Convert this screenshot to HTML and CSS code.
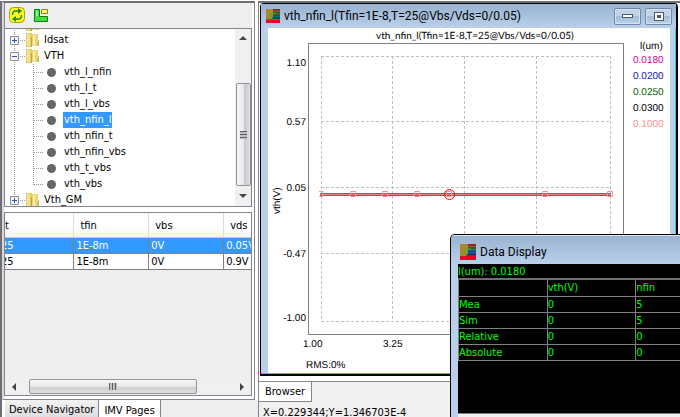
FILE: index.html
```html
<!DOCTYPE html>
<html lang="en">
<head>
<meta charset="utf-8">
<title>IMV Pages</title>
<link rel="stylesheet" href="styles.css">
</head>
<body>
<svg class="defs" aria-hidden="true">
  <defs>
    <symbol id="folder" viewBox="0 0 14 16">
      <path d="M0 1h6v14H0z" fill="#e6cd6c"/>
      <path d="M1 2h3v12H1z" fill="#f3e193"/>
      <path d="M6 2h6v6h1v6H5V4h1z" fill="#ecd478"/>
      <path d="M5 5h1v10H5z" fill="#c2a23a"/>
      <path d="M7 3h2v11H7z" fill="#f8ebae"/>
      <path d="M12 8h1v6h-1z" fill="#d4b64c"/>
      <path d="M11 11h1v2h-1z" fill="#8fb0bc"/>
    </symbol>
    <symbol id="chip" viewBox="0 0 16 16">
      <path d="M0 0h16v12H0z" fill="#17603f"/>
      <path d="M7 0h9v2H7z" fill="#8a2437"/>
      <path d="M7 2h9v1H7zM8 5h8v1H8z" fill="#b25a1c"/>
      <path d="M8 8h8v1H8z" fill="#1558a8"/>
      <path d="M8 10h8v1H8z" fill="#173c2b"/>
      <path d="M0 0h8v9l-2 3H0z" fill="#a98a2c"/>
      <path d="M1 2h1v1H1zM4 1h1v1H4zM2 5h1v1H2zM5 8h1v1H5zM6 2h1v1H6z" fill="#d2742c"/>
      <path d="M2 10l4-5h5M3 11l5-3" fill="none" stroke="#36b536"/>
      <path d="M0 12h16v4H0z" fill="#ee0022"/>
    </symbol>
  </defs>
</svg>
<div class="app">
  <aside class="side">
    <div class="pane">
      <div class="toolbar">
        <button class="tool" aria-label="Refresh">
          <svg width="17" height="17" viewBox="0 0 17 17"><rect x=".5" y=".5" width="15" height="15" rx="4" fill="#ffff18" stroke="#a89c20"/><path d="M3.500 8V6l2-2h4" fill="none" stroke="#1c8a1c" stroke-width="1.500"/><path d="M9 1l4 3-4 3z" fill="#1c8a1c"/><path d="M12.500 8v2l-2 2H7" fill="none" stroke="#1c8a1c" stroke-width="1.500"/><path d="M7 9l-4 3 4 3z" fill="#1c8a1c"/></svg>
        </button>
        <button class="tool" aria-label="Layout">
          <svg width="15" height="13" viewBox="0 0 15 13"><path d="M.5.500h5v7h8v5H.500z" fill="#3fe03f" stroke="#137a13"/><path d="M2 2h2v5H2z" fill="#90ff80"/><path d="M7.500.500h6v4h-6z" fill="#fff56a" stroke="#8a8420"/></svg>
        </button>
      </div>
      <div class="treebox">
        <ul class="tree">
          <li class="branch"><i class="knob"></i><svg class="folder"><use href="#folder"/></svg></li>
          <li class="branch"><i class="knob plus"></i><svg class="folder"><use href="#folder"/></svg><span>Idsat</span></li>
          <li class="branch"><i class="knob minus"></i><svg class="folder"><use href="#folder"/></svg><span>VTH</span></li>
          <li class="leaf"><i class="dot"></i><span>vth_l_nfin</span></li>
          <li class="leaf"><i class="dot"></i><span>vth_l_t</span></li>
          <li class="leaf"><i class="dot"></i><span>vth_l_vbs</span></li>
          <li class="leaf"><i class="dot"></i><span class="picked">vth_nfin_l</span></li>
          <li class="leaf"><i class="dot"></i><span>vth_nfin_t</span></li>
          <li class="leaf"><i class="dot"></i><span>vth_nfin_vbs</span></li>
          <li class="leaf"><i class="dot"></i><span>vth_t_vbs</span></li>
          <li class="leaf last"><i class="dot"></i><span>vth_vbs</span></li>
          <li class="branch"><i class="knob plus"></i><svg class="folder"><use href="#folder"/></svg><span>Vth_GM</span></li>
        </ul>
        <div class="vbar">
          <i class="arrow up"></i>
          <div class="thumb"><i class="grip"></i></div>
          <i class="arrow down"></i>
        </div>
      </div>
      <div class="tablebox">
        <div class="scroller">
          <table class="data">
            <thead><tr><th>t</th><th>tfin</th><th>vbs</th><th>vds</th></tr></thead>
            <tbody>
              <tr class="picked"><td>25</td><td>1E-8m</td><td>0V</td><td>0.05V</td></tr>
              <tr><td>25</td><td>1E-8m</td><td>0V</td><td>0.9V</td></tr>
            </tbody>
          </table>
        </div>
        <div class="hbar">
          <i class="arrow left"></i>
          <div class="thumb"><i class="grip"></i></div>
          <i class="arrow right"></i>
        </div>
      </div>
    </div>
    <div class="tabs">
      <button class="tab">Device Navigator</button>
      <button class="tab current">IMV Pages</button>
    </div>
  </aside>
  <main class="work">
    <div class="desktop">
      <section class="window plotwin">
        <header class="titlebar">
          <svg class="chip"><use href="#chip"/></svg>
          <h1>vth_nfin_l(Tfin=1E-8,T=25@Vbs/Vds=0/0.05)</h1>
          <button class="winbtn" aria-label="Minimize"><i class="min"></i></button>
          <button class="winbtn" aria-label="Maximize"><i class="max"></i></button>
        </header>
        <svg class="plot" viewBox="268 28 402 340" preserveAspectRatio="xMinYMin meet">
          <text class="caption" x="376" y="39">vth_nfin_l(Tfin=1E-8,T=25@Vbs/Vds=0/0.05)</text>
          <rect class="frame" x="308.500" y="43.500" width="315" height="291"/>
          <path class="grid" d="M321.500 56V321M392.500 56V321M464.500 56V321M536.500 56V321M610.500 56V321M321 56.500H610M321 121.500H610M321 187.500H610M321 253.500H610M321 321.500H610"/>
          <g text-anchor="end">
            <text x="306" y="66">1.10</text>
            <text x="306" y="125">0.57</text>
            <text x="306" y="191">0.05</text>
            <text x="306" y="257">-0.47</text>
            <text x="306" y="321">-1.00</text>
          </g>
          <text x="303" y="347">1.00</text>
          <text x="383" y="347">3.25</text>
          <text x="306" y="368">RMS:0%</text>
          <text transform="translate(280 214) rotate(-90)">vth(V)</text>
          <path class="curve" d="M320 194.500H611"/>
          <path class="core" d="M320 194.500H611"/>
          <path class="marks" d="M319 191.500h4v5h-4M350.500 191.500h5v5h-5zM382.500 191.500h5v5h-5zM414.500 191.500h5v5h-5zM446.500 191.500h5v5h-5zM542.500 191.500h5v5h-5zM607.500 191.500h5v5h-5z"/>
          <circle class="focus" cx="449.500" cy="194.500" r="5"/>
          <text x="640" y="49">l(um)</text>
          <text x="633" y="63" fill="#cc0099">0.0180</text>
          <text x="633" y="79" fill="#1414b4">0.0200</text>
          <text x="633" y="95" fill="#006400">0.0250</text>
          <text x="633" y="111">0.0300</text>
          <text x="633" y="127" fill="#ff9090">0.1000</text>
        </svg>
      </section>
    </div>
    <div class="strip"><button class="browser">Browser</button></div>
    <div class="status">X=0.229344;Y=1.346703E-4</div>
    <section class="window datawin">
      <header class="titlebar">
        <svg class="chip"><use href="#chip"/></svg>
        <h2>Data Display</h2>
      </header>
      <div class="console">
        <p>l(um): 0.0180</p>
        <div class="values">
          <table>
            <thead><tr><th></th><th>vth(V)</th><th>nfin</th></tr></thead>
            <tbody>
              <tr><td>Mea</td><td>0</td><td>5</td></tr>
              <tr><td>Sim</td><td>0</td><td>5</td></tr>
              <tr><td>Relative</td><td>0</td><td>0</td></tr>
              <tr><td>Absolute</td><td>0</td><td>0</td></tr>
            </tbody>
          </table>
        </div>
      </div>
    </section>
  </main>
</div>
</body>
</html>
```
FILE: styles.css
```css
* { box-sizing: border-box; }
html, body { height: 100%; margin: 0; }
body {
  overflow: hidden;
  background: #fff;
  color: #000;
  font: 11px/16px "DejaVu Sans Condensed", Tahoma, "DejaVu Sans", sans-serif;
}
button { margin: 0; padding: 0; border: 0; background: none; font: inherit; color: inherit; }
.defs { position: absolute; width: 0; height: 0; }
.app { display: flex; height: 100%; padding-top: 1px; background: #fff; }

/* navigator */
.side {
  display: flex;
  flex-direction: column;
  flex: 0 0 258px;
  min-width: 0;
  border-left: 2px solid #6e6e74;
}
.pane {
  display: flex;
  flex-direction: column;
  flex: 1;
  min-height: 0;
  margin-right: 3px;
  padding-right: 2px;
  padding-bottom: 3px;
  border: 1px solid #84848f;
  border-left: 2px solid #d8d8dc;
  border-top: 2px solid #6e6e74;
}
.toolbar {
  display: flex;
  align-items: center;
  gap: 8px;
  height: 25px;
  padding-left: 4px;
  border-left: 1px solid #84848f;
  background: #eee;
}
.tool { display: flex; }
.treebox {
  display: flex;
  height: 179px;
  overflow: hidden;
  border: 1px solid #84848f;
}
.tree {
  flex: 1;
  margin: -13px 0 0;
  padding: 0;
  list-style: none;
}
.tree li { position: relative; display: flex; align-items: center; height: 16px; }
.tree span { padding: 0 1px; }
.tree .picked { background: #3399ff; color: #fff; }
.branch {
  padding-left: 5px;
  background:
    repeating-linear-gradient(#999 0 1px, transparent 1px 2px) 9px 0 / 1px 100% no-repeat,
    repeating-linear-gradient(90deg, #999 0 1px, transparent 1px 2px) 15px 8px / 6px 1px no-repeat;
}
.leaf {
  padding-left: 42px;
  background:
    repeating-linear-gradient(#999 0 1px, transparent 1px 2px) 9px 0 / 1px 100% no-repeat,
    repeating-linear-gradient(#999 0 1px, transparent 1px 2px) 28px 0 / 1px 100% no-repeat,
    repeating-linear-gradient(90deg, #999 0 1px, transparent 1px 2px) 29px 8px / 10px 1px no-repeat;
}
.leaf.last {
  background:
    repeating-linear-gradient(#999 0 1px, transparent 1px 2px) 9px 0 / 1px 100% no-repeat,
    repeating-linear-gradient(#999 0 1px, transparent 1px 2px) 28px 0 / 1px 9px no-repeat,
    repeating-linear-gradient(90deg, #999 0 1px, transparent 1px 2px) 29px 8px / 10px 1px no-repeat;
}
.dot { width: 9px; height: 9px; margin-right: 7px; border-radius: 50%; background: #666; }
.knob { width: 9px; height: 9px; margin-right: 7px; }
.plus, .minus { border: 1px solid #8c8c94; border-radius: 1px; }
.minus { background: linear-gradient(#3a55a0, #3a55a0) center / 5px 1px no-repeat, #f4f4f4; }
.plus {
  background:
    linear-gradient(#3a55a0, #3a55a0) center / 5px 1px no-repeat,
    linear-gradient(#3a55a0, #3a55a0) center / 1px 5px no-repeat,
    #f4f4f4;
}
.folder { width: 14px; height: 16px; margin-right: 3px; }

/* scroll bars */
.vbar, .hbar { display: flex; align-items: center; background: #f0f0f0; }
.vbar { flex: 0 0 16px; flex-direction: column; padding: 7px 0 8px; }
.vbar .thumb {
  width: 15px;
  height: 103px;
  margin-top: auto;
  margin-bottom: 8px;
  background: linear-gradient(90deg, #f6f6f6, #e8e8e8 50%, #c8c8cc 55%, #dedee2);
}
.hbar { height: 17px; padding: 0 7px; gap: 13px; }
.hbar .thumb {
  width: 168px;
  height: 15px;
  margin-right: auto;
  background: linear-gradient(#f6f6f6, #e8e8e8 50%, #cfcfd2 55%, #dedee2);
}
.thumb { display: flex; align-items: center; justify-content: center; border: 1px solid #939393; border-radius: 2px; }
.grip { width: 7px; height: 8px; background: repeating-linear-gradient(#606060 0 1px, #c0c0c0 1px 3px); }
.hbar .grip { width: 8px; height: 7px; background: repeating-linear-gradient(90deg, #606060 0 1px, #c0c0c0 1px 3px); }
.arrow { border: 4px solid transparent; }
.up { border-top: 0; border-bottom-color: #444; }
.down { border-bottom: 0; border-top-color: #444; }
.left { border-left: 0; border-right-color: #444; }
.right { border-right: 0; border-left-color: #444; }

/* conditions table */
.tablebox {
  display: flex;
  flex-direction: column;
  flex: 1;
  min-height: 0;
  margin-top: 5px;
  border: 1px solid #84848f;
  background: #eee;
}
.scroller { flex: 1; min-height: 0; overflow: hidden; }
.data { width: 300px; margin-left: -6px; table-layout: fixed; border-collapse: collapse; }
.data th {
  height: 24px;
  padding: 2px 0 0 6px;
  border-right: 1px solid #dcdcdc;
  border-bottom: 1px solid #c8c8c8;
  background: linear-gradient(#fff 50%, #f3f4f6);
  font-weight: 400;
  text-align: left;
}
.data td {
  height: 16px;
  padding: 0 0 0 2px;
  border-right: 1px solid #808080;
  border-bottom: 1px solid #808080;
  background: #fff;
  line-height: 15px;
}
.data .picked td { background: #3399ff; color: #fff; }

.tabs { display: flex; height: 17px; overflow: hidden; margin-left: 3px; background: #eee; }
.tab { height: 24px; padding: 2px 4px 6px; border-right: 1px solid #84848f; background: linear-gradient(#f2f2f2, #d6d6da); }
.current { padding: 3px 5px 5px; background: #fff; }

/* work area */
.work {
  position: relative;
  display: flex;
  flex-direction: column;
  flex: 1;
  min-width: 0;
  border-left: 1px solid #84848f;
  border-top: 2px solid #6e6e74;
  background: #f0f0f0;
}
.desktop { display: flex; flex: 1; min-height: 0; padding: 0 2px 5px 1px; background: #fff; }
.window { border: 1px solid #000; background: #bad0ea; }
.titlebar { display: flex; align-items: center; gap: 4px; background: linear-gradient(#98b3d0, #bad0ea); }
.titlebar h1, .titlebar h2 {
  flex: 1;
  margin: 0;
  overflow: hidden;
  font: 12px/18px Roboto, "Noto Sans", sans-serif;
  white-space: nowrap;
}
.chip { flex: none; width: 16px; height: 16px; }
.plotwin {
  display: flex;
  flex-direction: column;
  flex: 1;
  min-width: 0;
  padding: 0 6px 0 7px;
  border-width: 1px 2px 2px 1px;
  border-radius: 4px 4px 0 0;
  box-shadow: inset -1px -1px #30c8e8;
}
.plotwin .titlebar { height: 24px; margin: 0 -6px 0 -7px; padding: 0 4px 0 5px; }
.plotwin .chip { width: 14px; height: 14px; }
.winbtn {
  display: flex;
  align-items: center;
  justify-content: center;
  width: 27px;
  height: 17px;
  border: 1px solid #6f87a5;
  border-radius: 2px;
  background: linear-gradient(#c0d3e8 50%, #a3bdd9 50%, #bdd2ea);
  box-shadow: inset 0 0 0 1px #d6e4f2;
}
.min { width: 11px; height: 4px; border: 1px solid #505868; background: #fff; }
.max { width: 10px; height: 9px; border: 1px solid #505868; background: linear-gradient(#505868, #505868) center / 4px 3px no-repeat, #fff; }
.plot {
  flex: 1;
  min-height: 0;
  width: 100%;
  margin-bottom: 1px;
  background: #fff;
  font: 10px "Liberation Sans", Arial, sans-serif;
  text-rendering: geometricPrecision;
}
.caption { font-family: Lato, "Liberation Sans", sans-serif; }
.frame { fill: none; stroke: #808080; }
.grid { fill: none; stroke: #c0c0c0; stroke-dasharray: 3 2; }
.curve { stroke: #805c5c; stroke-width: 3; }
.core { stroke: #ff8080; }
.marks { fill: none; stroke: #ff9090; }
.focus { fill: none; stroke: #f00; }

.strip { display: flex; height: 21px; border-top: 1px solid #84848f; }
.browser { padding: 0 6px; border: 1px solid #84848f; border-width: 0 1px 1px 0; background: #fff; }
.status { height: 15px; padding: 3px 4px 0; overflow: hidden; white-space: nowrap; }

/* floating readout */
.datawin {
  position: absolute;
  left: 191px;
  right: 0;
  top: 231px;
  bottom: 0;
  padding-left: 7px;
  border-width: 1px 0 0 1px;
  border-radius: 5px 0 0 0;
  overflow: hidden;
}
.datawin .titlebar { height: 29px; margin-left: -7px; padding: 4px 9px 0; box-shadow: inset 0 1px #dce8f4; }
.console { height: 150px; border-bottom: 1px solid #808080; background: #000; color: #0f0; box-shadow: 0 9px #f0f0f0; }
.console p { height: 14px; margin: 0; line-height: 15px; }
.values { border-top: 2px solid #707070; }
.values table { width: 267px; table-layout: fixed; border-collapse: collapse; border-left: 1px solid #808080; }
.values th, .values td {
  height: 16px;
  padding: 0 1px 0 0;
  border-right: 1px solid #808080;
  border-bottom: 1px solid #808080;
  font-weight: 400;
  line-height: 15px;
  text-align: left;
}
```
